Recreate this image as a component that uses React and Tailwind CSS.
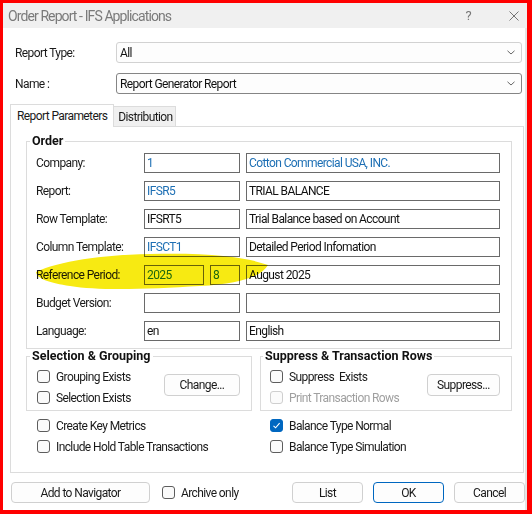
import React from "react";

function Check({ checked = false, disabled = false }) {
  if (checked) {
    return (
      <span className="w-[13px] h-[13px] rounded-[3px] bg-[#0067c0] border border-[#0067c0] flex items-center justify-center shrink-0">
        <svg width="9" height="9" viewBox="0 0 9 9">
          <polyline points="1.5,4.8 3.6,6.8 7.6,2.2" fill="none" stroke="#ffffff" strokeWidth="1.1" />
        </svg>
      </span>
    );
  }
  return (
    <span
      className={
        disabled
          ? "w-[13px] h-[13px] rounded-[3px] border border-[#cfcfcf] bg-[#fbfbfb] shrink-0"
          : "w-[13px] h-[13px] rounded-[3px] border border-[#5d5d5d] bg-[#fafafa] shrink-0"
      }
    />
  );
}

function CheckRow({ label, checked, disabled }) {
  return (
    <div className="h-[21px] flex items-center gap-[6px]">
      <Check checked={checked} disabled={disabled} />
      <span className={disabled ? "text-[#a0a0a0]" : "text-[#1a1a1a]"}>{label}</span>
    </div>
  );
}

function Field({ value, blue, className }) {
  return (
    <div
      className={
        "h-[20px] border border-[#6a6a6a] pl-[2px] flex items-center shrink-0 " +
        (blue ? "text-[#1d6fb4] " : "text-[#111] ") +
        className
      }
    >
      {value}
    </div>
  );
}

function Row({ label, children }) {
  return (
    <div className="flex items-center h-[20px]">
      <div className="w-[108px] shrink-0 text-[#1a1a1a]">{label}</div>
      <div className="flex gap-[6px]">{children}</div>
    </div>
  );
}

function Btn({ children, className }) {
  return (
    <div
      className={
        "h-[21px] rounded-[4px] border border-[#d0d0d0] bg-[#fdfdfd] flex items-center justify-center text-[#1a1a1a] " +
        className
      }
    >
      {children}
    </div>
  );
}

function Chevron() {
  return (
    <svg width="8" height="5" viewBox="0 0 8 5" className="mr-[6px]">
      <polyline points="0.5,0.8 4,4 7.5,0.8" fill="none" stroke="#555" strokeWidth="0.9" />
    </svg>
  );
}

export default function App() {
  return (
    <div className="relative w-[532px] h-[514px] bg-[#ff0000] pl-[3px] pt-[3px] pr-[5px] pb-[4px] font-[Roboto,'Liberation_Sans',sans-serif] text-[12px] tracking-[-0.6px] leading-[14px]">
      <div className="w-full h-full bg-white flex flex-col">
        {/* Title bar */}
        <div className="h-[25px] bg-[#f0f0f0] flex items-center pl-[5px] pr-[8px] shrink-0">
          <span className="text-[14px] tracking-[-0.9px] text-[#7a7a7a]">Order Report - IFS Applications</span>
          <span className="ml-auto text-[13px] text-[#777] mr-[38px]">?</span>
          <svg width="10" height="10" viewBox="0 0 10 10">
            <path d="M0.5 0.5 L9.5 9.5 M9.5 0.5 L0.5 9.5" stroke="#666" strokeWidth="0.9" />
          </svg>
        </div>

        <div className="flex-1 flex flex-col border-r-[2px] border-[#e4e4e4]">
          {/* Top form */}
          <div className="pl-[12px] pr-[3px] pt-[14px] flex flex-col gap-[10px]">
            <div className="flex items-center">
              <div className="w-[101px] text-[#1a1a1a]">Report Type:</div>
              <div className="flex-1 h-[21px] rounded-[3px] border border-[#d2d2d2] bg-[#fdfdfd] flex items-center pl-[3px]">
                <span className="text-[#111]">All</span>
                <span className="ml-auto"><Chevron /></span>
              </div>
            </div>
            <div className="flex items-center">
              <div className="w-[101px] text-[#1a1a1a]">Name :</div>
              <div className="flex-1 h-[21px] rounded-[3px] border border-[#858585] bg-[#fdfdfd] flex items-center pl-[3px]">
                <span className="text-[#111]">Report Generator Report</span>
                <span className="ml-auto"><Chevron /></span>
              </div>
            </div>
          </div>

          {/* Tabs */}
          <div className="pl-[7px] pr-[1px] pt-[10px]">
            <div className="flex items-end">
              <div className="relative z-10 h-[23px] -mb-[1px] bg-white border border-b-0 border-[#dcdcdc] pl-[6px] pr-[6px] flex items-center text-[#1a1a1a]">
                Report Parameters
              </div>
              <div className="h-[20px] bg-[#f0f0f0] border border-l-0 border-b-0 border-[#dcdcdc] pl-[4px] pr-[2px] flex items-center text-[#1a1a1a]">
                Distribution
              </div>
            </div>

            {/* Panel */}
            <div className="h-[347px] border border-[#dcdcdc] bg-white pl-[15px] pr-[11px] pt-[7px]">
              <fieldset className="border border-[#dcdcdc] pl-[9px] pb-[7px]">
                <legend className="-ml-[6px] px-[2px] font-bold text-[12.5px] tracking-[0px] text-[#111] leading-[14px]">Order</legend>
                <div className="flex flex-col gap-[8px] pt-[5px]">
                  <Row label="Company:">
                    <Field value="1" blue className="w-[96px]" />
                    <Field value="Cotton Commercial USA, INC." blue className="w-[254px]" />
                  </Row>
                  <Row label="Report:">
                    <Field value="IFSR5" blue className="w-[96px]" />
                    <Field value="TRIAL BALANCE" className="w-[254px]" />
                  </Row>
                  <Row label="Row Template:">
                    <Field value="IFSRT5" className="w-[96px]" />
                    <Field value="Trial Balance based on Account" className="w-[254px]" />
                  </Row>
                  <Row label="Column Template:">
                    <Field value="IFSCT1" blue className="w-[96px]" />
                    <Field value="Detailed Period Infomation" className="w-[254px]" />
                  </Row>
                  <Row label="Reference Period:">
                    <Field value="2025" blue className="w-[60px]" />
                    <Field value="8" blue className="w-[30px]" />
                    <Field value="August 2025" className="w-[254px]" />
                  </Row>
                  <Row label="Budget Version:">
                    <Field value="" className="w-[96px]" />
                    <Field value="" className="w-[254px]" />
                  </Row>
                  <Row label="Language:">
                    <Field value="en" className="w-[96px]" />
                    <Field value="English" className="w-[254px]" />
                  </Row>
                </div>
              </fieldset>

              <div className="grid grid-cols-[226px_1fr] gap-[8px]">
                <fieldset className="border border-[#dcdcdc] pl-[10px] pr-[11px] pb-[2px]">
                  <legend className="-ml-[7px] px-[2px] font-bold text-[12.5px] tracking-[0px] text-[#111] leading-[14px]">Selection &amp; Grouping</legend>
                  <div className="flex pt-[3px]">
                    <div className="flex flex-col">
                      <CheckRow label="Grouping Exists" />
                      <CheckRow label="Selection Exists" />
                    </div>
                    <Btn className="ml-auto mt-[8px] w-[76px] h-[22px]">Change...</Btn>
                  </div>
                </fieldset>
                <fieldset className="border border-[#dcdcdc] pl-[9px] pr-[11px] pb-[2px]">
                  <legend className="-ml-[7px] px-[2px] font-bold text-[12.5px] tracking-[0px] text-[#111] leading-[14px]">Suppress &amp; Transaction Rows</legend>
                  <div className="flex pt-[3px]">
                    <div className="flex flex-col">
                      <CheckRow label={"Suppress\u00a0 Exists"} />
                      <CheckRow label="Print Transaction Rows" disabled />
                    </div>
                    <Btn className="ml-auto mt-[8px] w-[73px] h-[22px]">Suppress...</Btn>
                  </div>
                </fieldset>
              </div>

              <div className="grid grid-cols-[234px_1fr] pt-[4px]">
                <div className="pl-[11px] flex flex-col">
                  <CheckRow label="Create Key Metrics" />
                  <CheckRow label="Include Hold Table Transactions" />
                </div>
                <div className="pl-[10px] flex flex-col">
                  <CheckRow label="Balance Type Normal" checked />
                  <CheckRow label="Balance Type Simulation" />
                </div>
              </div>
            </div>
          </div>

          {/* Bottom buttons */}
          <div className="flex items-center pl-[8px] pt-[9px]">
            <Btn className="w-[139px]">Add to Navigator</Btn>
            <div className="ml-[12px] flex items-center gap-[6px]">
              <Check />
              <span className="text-[#1a1a1a]">Archive only</span>
            </div>
            <Btn className="ml-auto w-[71px]">List</Btn>
            <Btn className="ml-[10px] w-[71px] !border-[#0067c0]">OK</Btn>
            <Btn className="ml-[10px] w-[71px]">Cancel</Btn>
          </div>
        </div>
      </div>

      {/* Yellow highlighter stroke */}
      <svg
        className="absolute left-0 top-0 pointer-events-none mix-blend-multiply"
        width="532"
        height="514"
        viewBox="0 0 532 514"
      >
        <path
          d="M36 272 C60 261 100 255 150 254 C200 253 240 255 268 265 C262 276 240 284 200 286 C150 289 100 291 70 286 C50 283 37 279 36 272 Z"
          fill="#f7ea12"
        />
      </svg>
    </div>
  );
}
